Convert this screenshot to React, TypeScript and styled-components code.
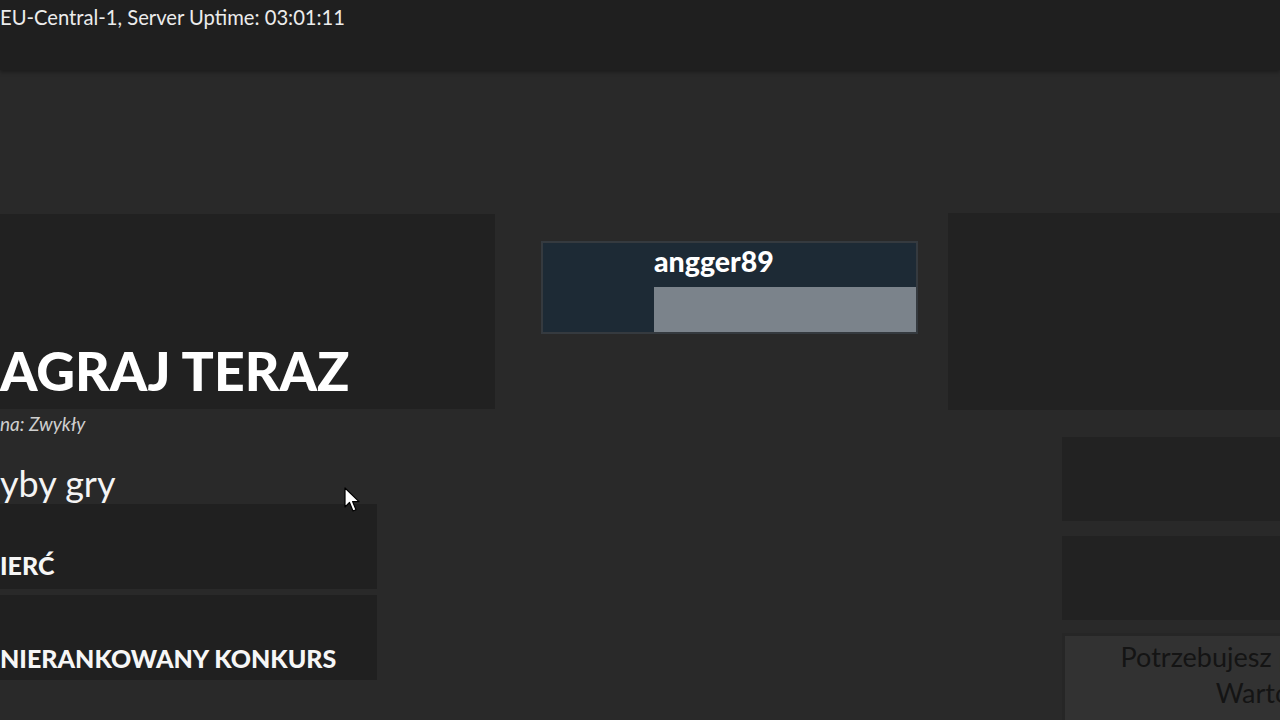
import React from "react";
import styled, { createGlobalStyle } from "styled-components";

const Global = createGlobalStyle`
  html, body { margin: 0; padding: 0; background: #292929; }
  body { font-family: Lato, "Noto Sans", sans-serif; }
`;

const Page = styled.div`
  position: relative;
  width: 1280px;
  height: 720px;
  overflow: hidden;
  background: #292929;
  color: #f2f2f2;
  display: flex;
  flex-direction: column;
`;

const TopBar = styled.header`
  height: 70px;
  flex: none;
  background: #1f1f1f;
  box-shadow: 0 2px 4px rgba(0, 0, 0, 0.35);
  position: relative;
  z-index: 1;
`;

const ServerInfo = styled.div`
  font-size: 20.2px;
  line-height: 24px;
  padding-top: 5px;
  color: #ececec;
  white-space: nowrap;
`;

const Main = styled.main`
  display: flex;
  align-items: flex-start;
  padding-top: 143px;
`;

const LeftColumn = styled.section`
  width: 495px;
  flex: none;
  padding-top: 1px;
  display: flex;
  flex-direction: column;
`;

const Hero = styled.div`
  height: 195px;
  background: #212121;
  display: flex;
  align-items: flex-end;
  box-sizing: border-box;
  padding-bottom: 10px;
`;

const HeroTitle = styled.h1`
  margin: 0;
  font-size: 53.5px;
  line-height: 58px;
  font-weight: 900;
  color: #ffffff;
  white-space: nowrap;
`;

const Subtitle = styled.div`
  font-style: italic;
  font-size: 19px;
  line-height: 24px;
  margin-top: 3px;
  color: #cfcfcf;
`;

const SectionTitle = styled.h2`
  margin: 0;
  margin-top: 26px;
  font-size: 36px;
  line-height: 42px;
  font-weight: 400;
  color: #f4f4f4;
`;

const ModeList = styled.div`
  width: 377px;
  display: flex;
  flex-direction: column;
  gap: 6px;
`;

const ModeRow = styled.div`
  height: 85px;
  background: #202020;
  display: flex;
  align-items: flex-end;
  box-sizing: border-box;
  padding-bottom: ${(p: { $pb: number }) => p.$pb}px;
`;

const ModeLabel = styled.span`
  font-size: 25px;
  line-height: 30px;
  font-weight: 900;
  color: #f6f6f6;
  white-space: nowrap;
`;

const CenterColumn = styled.section`
  width: 377px;
  flex: none;
  margin-left: 46px;
  padding-top: 28px;
`;

const PlayerCard = styled.div`
  height: 93px;
  box-sizing: border-box;
  border: 2px solid #353a3f;
  background: #1d2a35;
  display: flex;
`;

const Avatar = styled.div`
  width: 111px;
  flex: none;
`;

const PlayerInfo = styled.div`
  flex: 1;
  display: flex;
  flex-direction: column;
`;

const PlayerName = styled.div`
  height: 44px;
  font-size: 28.5px;
  line-height: 36px;
  font-weight: 900;
  color: #ffffff;
`;

const ProgressBar = styled.div`
  flex: 1;
  background: #7b838b;
`;

const RightColumn = styled.section`
  flex: 1;
  margin-left: 30px;
  display: flex;
  flex-direction: column;
`;

const RightPanel = styled.div`
  height: 197px;
  background: #222222;
`;

const SideList = styled.div`
  margin-left: 114px;
  margin-top: 27px;
  display: flex;
  flex-direction: column;
  gap: 15px;
`;

const SidePanel = styled.div`
  height: 84px;
  background: #222222;
`;

const HelpBox = styled.div`
  width: 382px;
  height: 100px;
  margin-top: -2px;
  box-sizing: border-box;
  border: 3px solid #262626;
  background: #323232;
  color: #141414;
  font-size: 27px;
  line-height: 36px;
  text-align: center;
  padding-top: 3px;
`;

const HelpLine = styled.div`
  white-space: nowrap;
`;

const Cursor = styled.svg`
  position: absolute;
  left: 344px;
  top: 487px;
  width: 18px;
  height: 28px;
  z-index: 5;
`;

export default function App() {
  return (
    <Page>
      <Global />
      <TopBar>
        <ServerInfo>EU-Central-1, Server Uptime: 03:01:11</ServerInfo>
      </TopBar>
      <Main>
        <LeftColumn>
          <Hero>
            <HeroTitle>AGRAJ TERAZ</HeroTitle>
          </Hero>
          <Subtitle>na: Zwykły</Subtitle>
          <SectionTitle>yby gry</SectionTitle>
          <ModeList>
            <ModeRow $pb={9}>
              <ModeLabel>IERĆ</ModeLabel>
            </ModeRow>
            <ModeRow $pb={7}>
              <ModeLabel>NIERANKOWANY KONKURS</ModeLabel>
            </ModeRow>
          </ModeList>
        </LeftColumn>
        <CenterColumn>
          <PlayerCard>
            <Avatar />
            <PlayerInfo>
              <PlayerName>angger89</PlayerName>
              <ProgressBar />
            </PlayerInfo>
          </PlayerCard>
        </CenterColumn>
        <RightColumn>
          <RightPanel />
          <SideList>
            <SidePanel />
            <SidePanel />
            <HelpBox>
              <HelpLine>Potrzebujesz pomocy?</HelpLine>
              <HelpLine>Warto</HelpLine>
            </HelpBox>
          </SideList>
        </RightColumn>
      </Main>
      <Cursor viewBox="0 0 18 28">
        <path
          d="M1 1 L1 20 L5.5 15.5 L9 24 L12 22.8 L8.6 14.6 L15 14.6 Z"
          fill="#ffffff"
          stroke="#000000"
          strokeWidth="1.2"
          strokeLinejoin="round"
        />
      </Cursor>
    </Page>
  );
}
